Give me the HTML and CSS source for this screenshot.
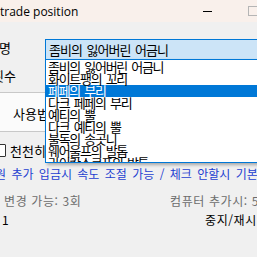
FILE: index.html
```html
<!DOCTYPE html>
<html lang="ko">
<head>
    <meta charset="UTF-8">
    <meta name="viewport" content="width=device-width, initial-scale=1.0">
    <title>trade position</title>
    <link rel="stylesheet" href="styles.css">
</head>
<body>
    <div class="titlebar">
        <span class="title">trade position</span>
        <span class="btn-min"></span>
        <span class="btn-max"></span>
    </div>
    <div class="client">
        <div class="row row-name">
            <label class="lbl">아이템명</label>
            <div class="combo">좀비의 잃어버린 어금니</div>
        </div>
        <div class="row row-count">
            <label class="lbl">구매 횟수</label>
        </div>
        <div class="usage">
            <button class="usage-btn">사용법</button>
        </div>
        <div class="slow">
            <span class="check"></span>
            <span>천천히</span>
        </div>
        <p class="note">원 추가 입금시 속도 조절 가능 / 체크 안할시 기본</p>
        <div class="status">
            <span class="status-left">변경 가능: 3회</span>
            <span>컴퓨터 추가시: 5</span>
        </div>
        <div class="status status-run">
            <span class="status-left">1</span>
            <span>중지/재시작</span>
        </div>

        <ul class="dropdown">
            <li>좀비의 잃어버린 어금니</li>
            <li>화이트팽의 꼬리</li>
            <li class="selected">페페의 부리</li>
            <li>다크 페페의 부리</li>
            <li>예티의 뿔</li>
            <li>다크 예티의 뿔</li>
            <li>불독의 송곳니</li>
            <li>웨어울프의 발톱</li>
            <li>라이칸스로프의 발톱</li>
        </ul>
    </div>
</body>
</html>
```

FILE: styles.css
```css
body {
    margin: 0;
    width: 257px;
    height: 257px;
    overflow: hidden;
    background-color: #f0f0f0;
    font-family: "Noto Sans CJK KR", "Noto Sans", sans-serif;
    color: #000;
}
.titlebar {
    display: flex;
    align-items: center;
    height: 22px;
    background-color: #f9f0eb;
}
.title {
    font-family: "Open Sans", "Noto Sans", sans-serif;
    font-size: 12px;
    flex: 1;
}
.btn-min {
    width: 9px;
    height: 1px;
    background-color: #000;
    margin-right: 36px;
}
.btn-max {
    width: 8px;
    height: 8px;
    border: 1px solid #b5b5b5;
    margin-right: -1px;
}
.client {
    position: relative;
    height: 235px;
    font-size: 12px;
}
.row {
    display: flex;
    align-items: center;
}
.lbl {
    flex-shrink: 0;
    width: 60px;
    margin-left: -49px;
    text-align: right;
    font-size: 13px;
    white-space: nowrap;
}
.row-name {
    padding-top: 17px;
    align-items: flex-start;
}
.row-name .lbl {
    margin-top: -1px;
}
.combo {
    flex-shrink: 0;
    margin-left: 34px;
    width: 240px;
    height: 19px;
    line-height: 19px;
    padding-left: 3px;
    border: 1px solid #0078d7;
    background-color: #cce4f7;
    font-size: 13px;
    letter-spacing: -1px;
    word-spacing: 2px;
    white-space: nowrap;
}
.row-count {
    height: 30px;
}
.row-count .lbl {
    margin-left: -44px;
}
.usage {
    margin: 0 0 0 -10px;
}
.usage-btn {
    width: 80px;
    height: 40px;
    margin-top: 2px;
    border: 1px solid #c8c8c8;
    background-color: #fbfbfb;
    font-family: inherit;
    font-size: 13px;
    text-align: left;
    padding: 2px 0 0 22px;
}
.slow {
    display: flex;
    align-items: center;
    gap: 4px;
    margin-top: 9px;
    margin-left: -7px;
    font-size: 13px;
}
.check {
    width: 11px;
    height: 11px;
    border: 1px solid #333;
    border-radius: 1px;
    background-color: #fff;
}
.note {
    margin: 5px 0 0 -5px;
    color: #1e3fd0;
    font-size: 12px;
    word-spacing: 2px;
    white-space: nowrap;
}
.status {
    display: flex;
    margin: 10px 0 0 4px;
    color: #6d6d6d;
    font-size: 12px;
    letter-spacing: 0.6px;
    white-space: nowrap;
}
.status-left {
    flex-shrink: 0;
    width: 166px;
}
.status-run {
    margin-top: 2px;
    margin-left: 2px;
    color: #000;
}
.status-run .status-left {
    width: 203px;
}
.dropdown {
    position: absolute;
    left: 45px;
    top: 37px;
    width: 240px;
    height: 101px;
    margin: 0;
    padding: 1px 0 0;
    list-style: none;
    background-color: #fff;
    border: 1px solid #0078d7;
    box-shadow: 2px 2px 3px rgba(0, 0, 0, 0.3);
    overflow: hidden;
}
.dropdown li {
    height: 12px;
    line-height: 12px;
    padding-left: 2px;
    font-size: 13px;
    letter-spacing: -1.3px;
    word-spacing: 2px;
    white-space: nowrap;
}
.dropdown li.selected {
    background-color: #0078d7;
    color: #fff;
}
```
